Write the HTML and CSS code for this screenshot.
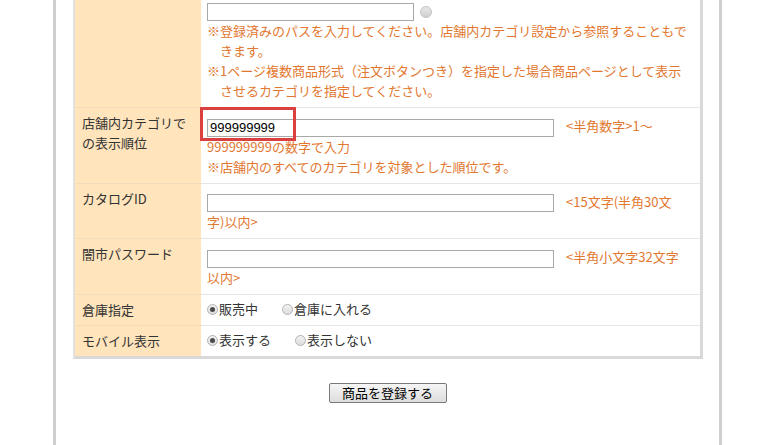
FILE: index.html
```html
<!DOCTYPE html>
<html lang="ja">
<head>
  <meta charset="UTF-8" />
  <title>商品登録</title>
  <link rel="stylesheet" href="styles.css">
</head>
<body>
  <div class="page">
    <!-- Item form table -->
    <div class="form-box">
      <table class="item-table">
        <tr>
          <th></th>
          <td>
            <input type="text" class="path-input"><span class="ref-icon"></span>
            <p class="note">※登録済みのパスを入力してください。店舗内カテゴリ設定から参照することもできます。</p>
            <p class="note">※1ページ複数商品形式（注文ボタンつき）を指定した場合商品ページとして表示させるカテゴリを指定してください。</p>
          </td>
        </tr>
        <tr>
          <th>店舗内カテゴリでの表示順位</th>
          <td class="mark-cell">
            <input type="text" class="wide-input" value="999999999"><span class="hint">&lt;半角数字&gt;1～999999999の数字で入力</span>
            <p class="sub-note">※店舗内のすべてのカテゴリを対象とした順位です。</p>
            <div class="mark-box"></div>
          </td>
        </tr>
        <tr>
          <th>カタログID</th>
          <td>
            <input type="text" class="wide-input"><span class="hint">&lt;15文字(半角30文<br>字)以内&gt;</span>
          </td>
        </tr>
        <tr>
          <th>闇市パスワード</th>
          <td>
            <input type="text" class="wide-input"><span class="hint">&lt;半角小文字32文字<br>以内&gt;</span>
          </td>
        </tr>
        <tr>
          <th>倉庫指定</th>
          <td class="radio-cell">
            <label class="choice"><span class="radio on"></span>販売中</label>
            <label class="choice"><span class="radio"></span>倉庫に入れる</label>
          </td>
        </tr>
        <tr>
          <th>モバイル表示</th>
          <td class="radio-cell">
            <label class="choice"><span class="radio on"></span>表示する</label>
            <label class="choice"><span class="radio"></span>表示しない</label>
          </td>
        </tr>
      </table>
    </div>

    <div class="submit-row">
      <button type="submit" class="submit-btn">商品を登録する</button>
    </div>
  </div>
</body>
</html>
```

FILE: styles.css
```css
body {
  margin: 0;
  padding: 0;
  background: #fff;
  font-family: "Noto Sans CJK JP", "Liberation Sans", sans-serif;
  font-size: 13px;
  color: #333;
}

.page {
  margin: -7px 0 0 53px;
  width: 663px;
  height: 470px;
  border-left: 3px solid #cfcfcf;
  border-right: 3px solid #cfcfcf;
}

.form-box {
  margin: 0 16px 0 17px;
  border-left: 2px solid #e2e2e2;
  border-right: 3px solid #d9d9d9;
  border-bottom: 3px solid #d9d9d9;
}

.item-table {
  width: 100%;
  border-collapse: collapse;
  table-layout: fixed;
  line-height: 20px;
}

.item-table th {
  width: 112px;
  padding: 5px 7px;
  background: #ffe4bc;
  font-weight: normal;
  text-align: left;
  vertical-align: top;
  border-bottom: 1px solid #f1dcbc;
}

.item-table td {
  padding: 8px 6px 6px;
  vertical-align: top;
  border-bottom: 1px solid #e6e6e6;
}

.item-table tr:last-child th,
.item-table tr:last-child td {
  border-bottom: none;
}

input[type="text"] {
  box-sizing: border-box;
  height: 18px;
  margin: 0;
  padding: 0 2px;
  border: 1px solid #a9a9a9;
  font-family: "Liberation Sans", sans-serif;
  font-size: 13px;
  color: #000;
  vertical-align: middle;
}

.path-input {
  width: 207px;
}

.wide-input {
  width: 347px;
  margin-right: 12px !important;
}

.ref-icon {
  display: inline-block;
  width: 10px;
  height: 10px;
  margin-left: 6px;
  border: 1px solid #c4c4c4;
  border-radius: 50%;
  background: linear-gradient(#e8e8e8, #cfcfcf);
  vertical-align: middle;
}

.note {
  margin: 0;
  padding-left: 13px;
  text-indent: -13px;
  color: #e2772f;
}

.hint,
.sub-note {
  color: #e2772f;
}

.sub-note {
  margin: 0;
}

/* red highlight drawn over the order field */
.mark-cell {
  position: relative;
}

.mark-box {
  position: absolute;
  left: -1px;
  top: -1px;
  width: 90px;
  height: 28px;
  border: 3px solid #d9403f;
}

.radio-cell {
  padding-top: 4px !important;
  padding-bottom: 3px !important;
}

.choice {
  margin-right: 21px;
}

.radio {
  display: inline-block;
  position: relative;
  width: 9px;
  height: 9px;
  margin-right: 1px;
  border: 1px solid #b5b5b5;
  border-radius: 50%;
  background: linear-gradient(#f2f2f2, #dcdcdc);
  vertical-align: -1px;
}

.radio.on::after {
  content: "";
  position: absolute;
  left: 2px;
  top: 2px;
  width: 5px;
  height: 5px;
  border-radius: 50%;
  background: #4a4a4a;
}

.submit-row {
  margin-top: 24px;
  text-align: center;
}

.submit-btn {
  width: 118px;
  height: 20px;
  padding: 0;
  border: 1px solid #7a7a7a;
  border-radius: 2px;
  background: linear-gradient(#f6f6f6, #dddddd);
  font-family: "Noto Sans CJK JP", sans-serif;
  font-size: 13px;
  line-height: 18px;
  color: #000;
}
```
